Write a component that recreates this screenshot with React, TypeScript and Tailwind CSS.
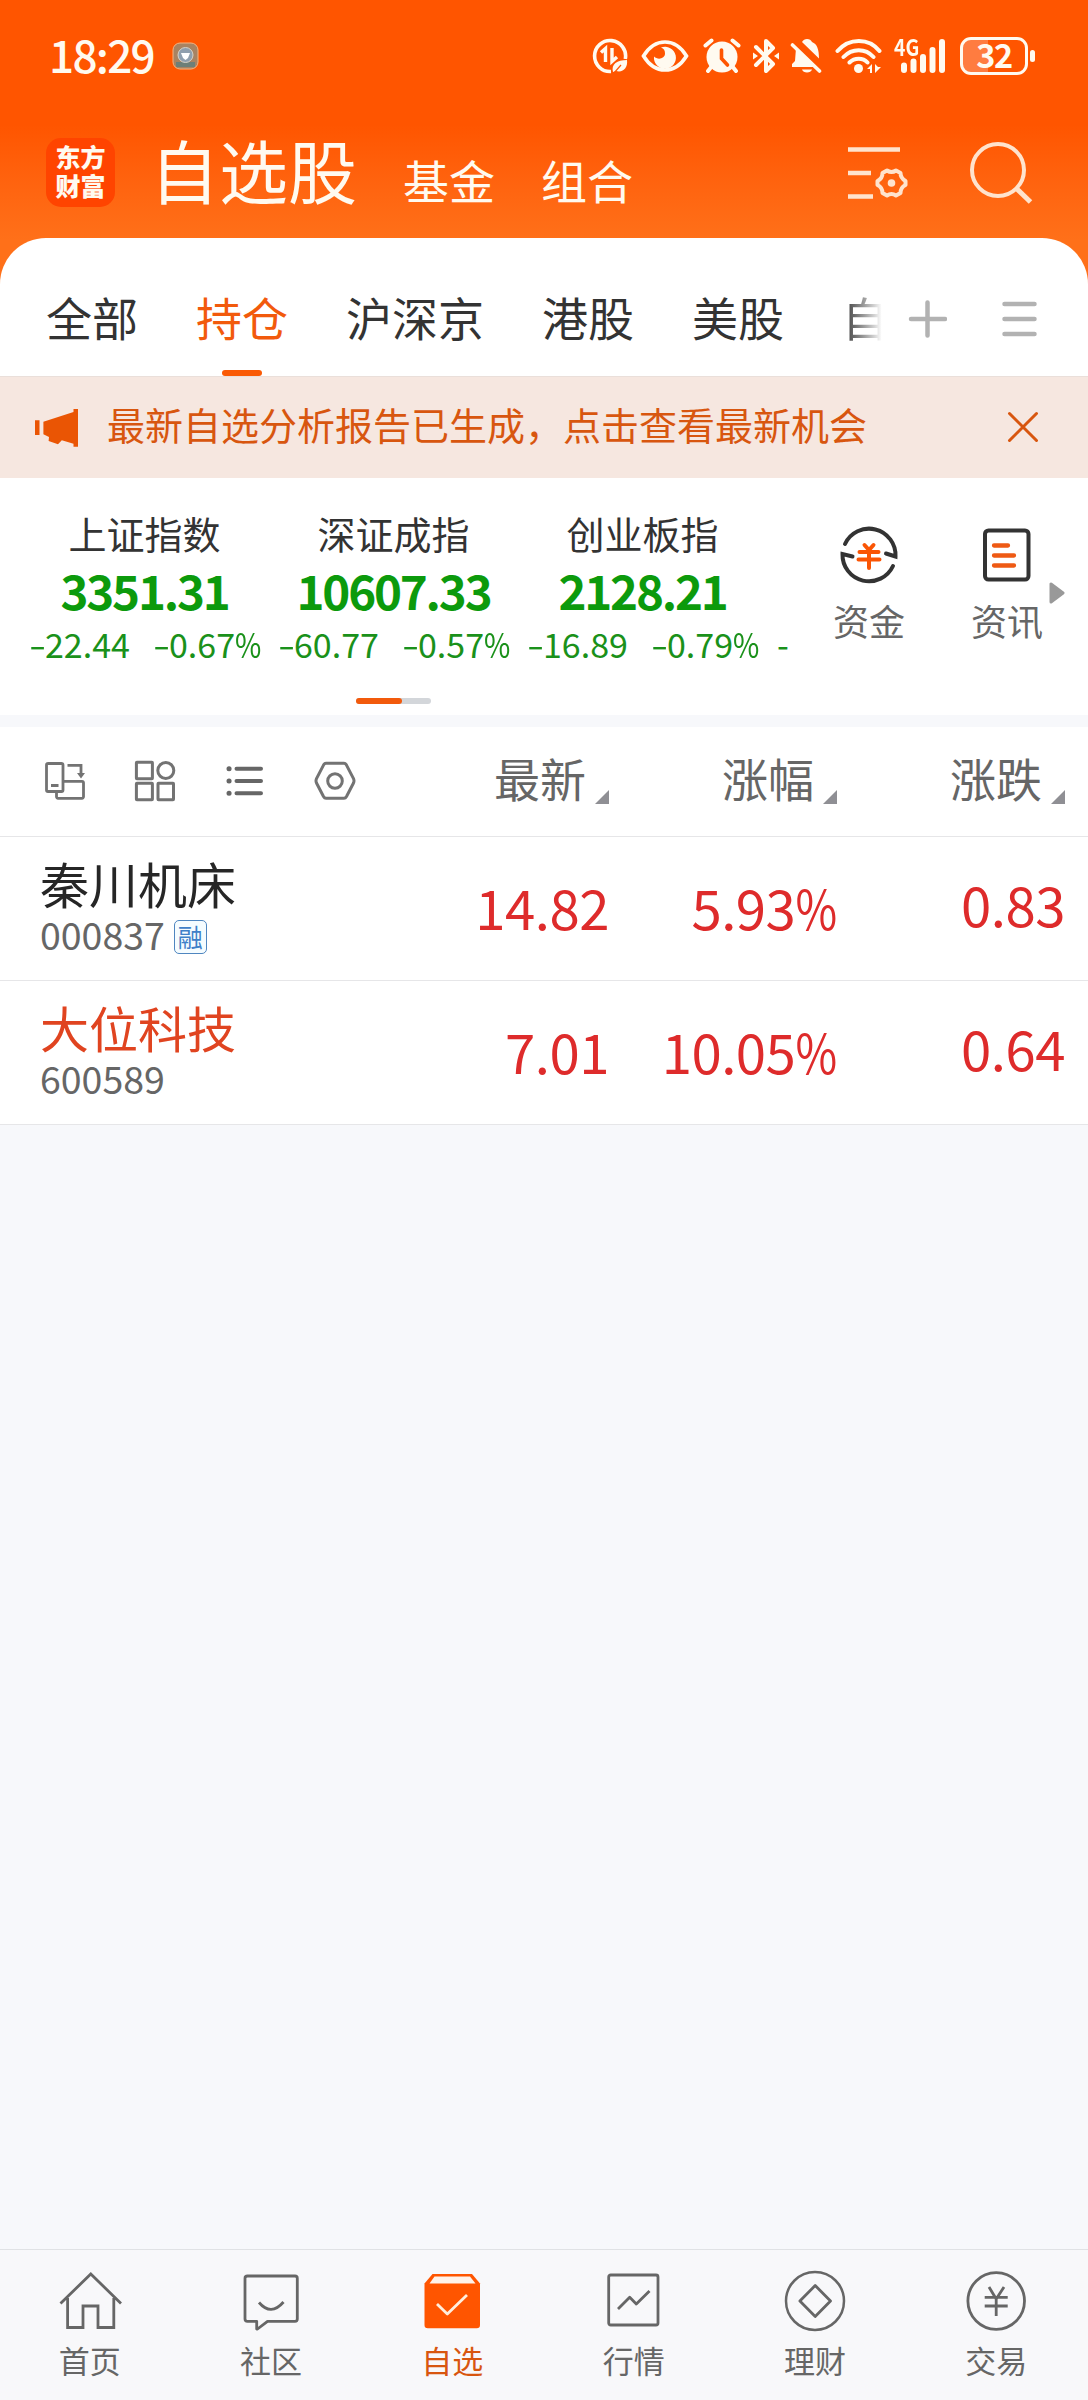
import type { ReactNode } from "react";

const tabs = ["全部", "持仓", "沪深京", "港股", "美股"];

const indices = [
  { name: "上证指数", value: "3351.31", change: "22.44", percent: "0.67" },
  { name: "深证成指", value: "10607.33", change: "60.77", percent: "0.57" },
  { name: "创业板指", value: "2128.21", change: "16.89", percent: "0.79" },
];

const stocks = [
  {
    name: "秦川机床",
    code: "000837",
    margin: true,
    color: "text-[#262626]",
    price: "14.82",
    percent: "5.93",
    change: "0.83",
  },
  {
    name: "大位科技",
    code: "600589",
    margin: false,
    color: "text-[#e04420]",
    price: "7.01",
    percent: "10.05",
    change: "0.64",
  },
];

function StatusIcons() {
  return (
    <div className="flex items-center text-[#fffaf0]">
      {/* data saver */}
      <svg width="36" height="36" viewBox="0 0 36 36" fill="none" stroke="currentColor">
        <path d="M19 33.500A15.500 15.500 0 1 1 33.300 21" strokeWidth="3.6" />
        <path d="M9 14.500l4.500-4V24M20 10v13.500l5-4.500" strokeWidth="3.4" />
        <path d="M21 34c-2-8 4-12 14-12 1 8-4 13-11 11z" fill="currentColor" stroke="none" />
        <path d="M22 35l7-8" stroke="#ff5500" strokeWidth="1.2" />
      </svg>
      {/* eye */}
      <svg className="ml-[13px]" width="48" height="36" viewBox="0 0 48 36">
        <path
          d="M2.500 18C8 9 15 4 24 4s16 5 21.500 14C40 27 33 32 24 32S8 27 2.500 18z"
          fill="none"
          stroke="currentColor"
          strokeWidth="3.6"
        />
        <path d="M20 9.500a11 11 0 1 1-7 9c4 4 11 2 11-3 0-3-1-5-4-6z" fill="currentColor" />
      </svg>
      {/* alarm */}
      <svg className="ml-[14px]" width="38" height="36" viewBox="0 0 38 36">
        <path
          d="M2.500 7.500l6-5M35.500 7.500l-6-5M9 28l-4 5M29 28l4 5"
          stroke="currentColor"
          strokeWidth="4"
          strokeLinecap="round"
        />
        <circle cx="19" cy="19" r="15.500" fill="currentColor" />
        <path
          d="M18.500 12v8.500l6 6.500"
          fill="none"
          stroke="#ff5500"
          strokeWidth="3.6"
          strokeLinecap="round"
        />
      </svg>
      {/* bluetooth */}
      <svg className="ml-[12px]" width="26" height="36" viewBox="0 0 26 36">
        <path
          d="M3 9l17 17-7 7V3l7 7L3 27"
          fill="none"
          stroke="currentColor"
          strokeWidth="4"
          strokeLinecap="round"
          strokeLinejoin="round"
        />
        <path d="M0 14.500l5 3.500-5 3.500zM26 14.500L21 18l5 3.500z" fill="currentColor" />
      </svg>
      {/* muted bell */}
      <svg className="ml-[11px]" width="33" height="36" viewBox="0 0 33 36">
        <path d="M12 4c1-2 3-3 5-3 2.500 0 4 1 5 3 5 2 7 7 7 16.500zM6 10l20 19H2v-3l3-3z" fill="currentColor" />
        <path d="M2.500 7l27 26" stroke="currentColor" strokeWidth="3.6" strokeLinecap="round" />
        <path d="M12 31.500h10c-1 4-9 4-10 0z" fill="currentColor" />
      </svg>
      {/* wifi */}
      <svg className="ml-[12px]" width="48" height="36" viewBox="0 0 48 36">
        <path
          d="M2.500 13C14-.5 34-.5 44.500 13M8.500 19c8.500-9 22-9 30 0M14.500 24.500c5-5 13.500-5 18 0"
          fill="none"
          stroke="currentColor"
          strokeWidth="4"
          strokeLinecap="round"
        />
        <circle cx="23.500" cy="30.500" r="4.500" fill="currentColor" />
        <path d="M37 26v9h-2v-4h-3zM40 26v9l6-6h-3z" fill="currentColor" />
      </svg>
      {/* signal */}
      <div className="relative ml-[11px] h-[36px] w-[52px]">
        <span className="absolute -top-[3px] left-0 origin-left scale-x-[0.84] text-[23px] leading-[23px] font-bold">
          4G
        </span>
        <svg className="absolute top-0 left-0" width="52" height="36" viewBox="0 0 52 36">
          <path
            d="M10 27.500v4.500M19.500 23.500v8.500M29 19v13M38.500 12v20M48 4v28"
            stroke="currentColor"
            strokeWidth="6"
            strokeLinecap="round"
          />
        </svg>
      </div>
      {/* battery */}
      <div className="ml-[14px] flex h-[38px] w-[68px] items-center justify-center rounded-[11px] border-[3px] border-current bg-linear-to-r from-[#ff7c40] from-40% to-transparent to-40%">
        <span className="-mt-[4px] text-[32.500px] leading-[34px] font-bold tracking-[-1.5px]">32</span>
      </div>
      <div className="ml-[2px] h-[12px] w-[5px] rounded-full bg-current" />
    </div>
  );
}

function Delta({ children }: { children: ReactNode }) {
  return (
    <span className="flex whitespace-nowrap">
      <span className="w-[16px] origin-left scale-x-[1.45]">-</span>
      {children}
    </span>
  );
}

function SortHeader({ children }: { children: ReactNode }) {
  return (
    <div className="flex w-[228px] justify-end">
      <span>{children}</span>
      <svg className="mt-[41px] ml-[9px]" width="14" height="14" viewBox="0 0 14 14">
        <path d="M14 0v14H0z" fill="#8f8f94" />
      </svg>
    </div>
  );
}

function NavItem({ label, active, children }: { label: string; active?: boolean; children: ReactNode }) {
  return (
    <div
      className={`flex flex-1 flex-col items-center pt-[19px] ${active ? "text-[#d8560f]" : "text-[#666666]"}`}
    >
      <svg
        width="64"
        height="64"
        viewBox="0 0 64 64"
        fill="none"
        stroke="currentColor"
        strokeWidth="2.8"
        strokeLinejoin="round"
      >
        {children}
      </svg>
      <span className="mt-[9px] -ml-[2px] text-[31px] leading-[36px]">{label}</span>
    </div>
  );
}

export default function App() {
  return (
    <div className="flex h-[2400px] w-[1088px] flex-col overflow-hidden bg-[#f7f8fb] font-['Noto_Sans_CJK_SC',sans-serif]">
      <div className="bg-linear-to-b from-[#ff5500] from-[125px] to-[#ff7019] to-[240px]">
        {/* Status bar */}
        <div className="flex h-[112px] items-center pl-[49px] text-[#fffaf0]">
          <span className="-mt-[4px] w-[123px] text-[44px] leading-[50px] font-medium tracking-[-1.7px]">
            18:29
          </span>
          <svg width="27" height="28" viewBox="0 0 27 28">
            <rect x="1" y="1" width="25" height="26" rx="7" fill="#a88362" stroke="#f5b380" />
            <path d="M4 20h19v5H4z" fill="#6d7f78" />
            <circle cx="13.500" cy="13" r="7.500" fill="#8f9fae" stroke="#d6d3c8" />
            <path d="M9 11h9l-2 5-2.500 2-2.500-2z" fill="#fff" />
          </svg>
          <div className="ml-[393px]">
            <StatusIcons />
          </div>
        </div>

        {/* Title bar */}
        <div className="flex h-[126px] text-[#fffaf0]">
          <div className="mt-[26px] ml-[46px] flex h-[69px] w-[69px] flex-col items-center rounded-[15px] bg-[#ff4400] pt-[4px] text-[25px] leading-[29px] font-black">
            <span>东方</span>
            <span>财富</span>
          </div>
          <div className="mt-[7px] ml-[35px] flex items-baseline gap-[46px] text-[46px] leading-[100px]">
            <span className="text-[69px]">自选股</span>
            <span>基金</span>
            <span>组合</span>
          </div>
          <svg
            className="mt-[33px] ml-[213px]"
            width="64"
            height="58"
            viewBox="0 0 64 58"
            fill="none"
            stroke="#ffe3cd"
            strokeWidth="4.500"
          >
            <path d="M2 4.500h52M2 28h23M2 51.500h25" />
            <path
              d="M41 25.500q4.500 3 9 0l4.500 2.500q0 5 5 8v4q-5 2.500-5 8l-4.500 2.500q-4.500-3-9 0L36.500 48q0-5.500-5-8v-4q5-2.500 5-8z"
              strokeWidth="4"
              strokeLinejoin="round"
            />
            <circle cx="45.500" cy="38" r="3.800" fill="#ffe3cd" stroke="none" />
          </svg>
          <svg
            className="mt-[27px] ml-[58px]"
            width="66"
            height="68"
            viewBox="0 0 66 68"
            fill="none"
            stroke="#ffe3cd"
            strokeWidth="4"
          >
            <circle cx="30" cy="31" r="26" />
            <path d="M48.500 49.500l14 13.500" strokeWidth="5" />
          </svg>
        </div>

        {/* Group tabs */}
        <div className="flex h-[138px] rounded-t-[46px] bg-white text-[46px] leading-[60px] text-[#333333]">
          <div className="flex w-[882px] gap-[58px] overflow-hidden pt-[48px] pl-[46px] whitespace-nowrap">
            {tabs.map((tab) =>
              tab === "持仓" ? (
                <div key={tab} className="flex flex-col items-center text-[#f25a0c]">
                  <span>{tab}</span>
                  <span className="mt-[24px] h-[6px] w-[40px] rounded-full bg-[#fa5a05]" />
                </div>
              ) : (
                <span key={tab}>{tab}</span>
              )
            )}
            <span className="w-[40px] shrink-0 overflow-hidden bg-linear-to-r from-[#333333] to-white bg-clip-text text-transparent">
              自
            </span>
          </div>
          <svg className="mt-[61px] ml-[25px]" width="40" height="40" viewBox="0 0 40 40">
            <path d="M4 20h34M20.500 3.500v33" stroke="#b2b2b2" strokeWidth="4.500" strokeLinecap="round" />
          </svg>
          <svg className="mt-[61px] ml-[53px]" width="40" height="40" viewBox="0 0 40 40">
            <path
              d="M4.500 5h30M4.500 20h30M4.500 35h30"
              stroke="#b2b2b2"
              strokeWidth="4.500"
              strokeLinecap="round"
            />
          </svg>
        </div>
      </div>

      {/* Report notice */}
      <div className="flex h-[102px] items-center border-t border-[#eadfda] bg-[#f6e7e0] pb-[2px] pl-[33px]">
        <svg width="48" height="42" viewBox="0 0 48 42" fill="#ea5504">
          <path d="M2 14.300h4.500V29H2zM10.400 15.700L40.500 6V3H45v37.700h-4.500v-3L28.800 34.300 25 38.300 15.600 35l.4-4-5.600-2.700z" />
        </svg>
        <span className="-mt-[6px] ml-[26px] w-[860px] text-[38px] leading-[50px] text-[#d8560f]">
          最新自选分析报告已生成，点击查看最新机会
        </span>
        <svg className="ml-[39px]" width="34" height="34" viewBox="0 0 34 34">
          <path
            d="M3.500 3.500l27 27M30.500 3.500l-27 27"
            stroke="#d8560f"
            strokeWidth="3"
            strokeLinecap="round"
          />
        </svg>
      </div>

      {/* Market indices */}
      <div className="h-[237px] shrink-0 bg-white">
        <div className="flex h-[220px]">
          <div className="flex w-[796px] overflow-hidden pl-[20px]">
            {indices.map((item) => (
              <div key={item.name} className="w-[249px] shrink-0 pt-[30px]">
                <div className="text-center text-[38px] leading-[50px] text-[#333333]">{item.name}</div>
                <div className="mt-[7px] text-center text-[47.500px] leading-[50px] font-bold tracking-[-2.2px] text-[#0c9a0c]">
                  {item.value}
                </div>
                <div className="mt-[6px] flex text-[34px] leading-[46px] text-[#1a911a]">
                  <span className="w-[124px] pl-[9px]">
                    <Delta>{item.change}</Delta>
                  </span>
                  <span className="pl-[9px]">
                    <Delta>
                      {item.percent}
                      <span className="origin-left scale-x-[0.84]">%</span>
                    </Delta>
                  </span>
                </div>
              </div>
            ))}
            <div className="pt-[143px] pl-[10px] text-[34px] leading-[46px] text-[#1a911a]">-</div>
          </div>

          <div className="flex pt-[47px] text-[36px] leading-[46px] text-[#666666]">
            <div className="ml-[36px] flex w-[74px] flex-col items-center">
              <svg width="60" height="60" viewBox="0 0 60 60" fill="none" strokeLinecap="round">
                <path
                  d="M6 19A26.500 26.500 0 0 1 56.500 31.500L47 28.500M54 41A26.500 26.500 0 0 1 3.500 29L13.500 31.500"
                  stroke="#333333"
                  strokeWidth="4"
                />
                <path
                  d="M25.500 20l4.500 5 4.500-5M20.500 27h19M19.500 34.500h21M30 25v18"
                  stroke="#fa5505"
                  strokeWidth="4"
                />
              </svg>
              <span className="mt-[12px]">资金</span>
            </div>
            <div className="ml-[64px] flex w-[74px] flex-col items-center">
              <svg width="60" height="60" viewBox="0 0 60 60" fill="none" strokeLinecap="round">
                <rect x="8" y="5.500" width="43.500" height="49" rx="3.500" stroke="#333333" strokeWidth="4" />
                <path d="M17 20.500h14M17 30.500h20M17 40.500h20" stroke="#ee5a14" strokeWidth="4.300" />
              </svg>
              <span className="mt-[12px]">资讯</span>
            </div>
            <svg className="mt-[57px] ml-[5px]" width="16" height="22" viewBox="0 0 16 22">
              <path d="M2 2v18L14 11z" fill="#999999" stroke="#999999" strokeWidth="3" strokeLinejoin="round" />
            </svg>
          </div>
        </div>
        <div className="ml-[356px] h-[6px] w-[75px] rounded-full bg-[#d3d6da]">
          <div className="h-[6px] w-[46px] rounded-full bg-[#f25a0c]" />
        </div>
      </div>

      {/* List header */}
      <div className="mt-[12px] flex h-[110px] shrink-0 border-b border-[#e6e6e8] bg-white">
        <div className="flex w-[381px] gap-[46px] pt-[32px] pl-[43px]">
          <svg width="44" height="44" viewBox="0 0 44 44" fill="none" stroke="#737373" strokeWidth="2.8">
            <rect x="3.500" y="4.500" width="16.500" height="28" rx="1.500" />
            <path d="M8 26.500h7.500M24.500 6.300H38V16M20.500 22.300h18.500a1.500 1.500 0 0 1 1.500 1.500v14a1.500 1.500 0 0 1-1.500 1.500H15a1.500 1.500 0 0 1-1.500-1.500v-5" />
            <path d="M34 14h8l-4 5.500z" fill="#737373" stroke="none" />
          </svg>
          <svg width="44" height="44" viewBox="0 0 44 44" fill="none" stroke="#737373" strokeWidth="3">
            <rect x="3.400" y="3.200" width="16" height="16.500" rx="0.500" />
            <circle cx="32.800" cy="11.500" r="8" />
            <rect x="3.400" y="24.300" width="16" height="16.500" rx="0.500" />
            <rect x="25" y="24.300" width="15.500" height="16.500" rx="0.500" />
          </svg>
          <svg width="44" height="44" viewBox="0 0 44 44" fill="none" stroke="#666666" strokeLinecap="round">
            <path d="M13.500 9.700h24.500M13.500 22h24.500M13.500 34.300h24.500" strokeWidth="4" />
            <path d="M6 9.700h.1M6 22h.1M6 34.300h.1" strokeWidth="5" />
          </svg>
          <svg width="44" height="44" viewBox="0 0 44 44" fill="none" stroke="#737373" strokeWidth="3">
            <path d="M13 4.300h18q1.500 0 2.500 1.800l7 13.500q1 2.200 0 4.400l-7 13.500q-1 1.800-2.500 1.800H13q-1.500 0-2.500-1.800l-7-13.500q-1-2.200 0-4.400l7-13.500q1-1.800 2.500-1.800z" />
            <circle cx="22" cy="22" r="7.300" />
          </svg>
        </div>
        <div className="flex pt-[22px] text-[46px] leading-[56px] text-[#666666]">
          <SortHeader>最新</SortHeader>
          <SortHeader>涨幅</SortHeader>
          <SortHeader>涨跌</SortHeader>
        </div>
      </div>

      {/* Stocks */}
      {stocks.map((stock) => (
        <div key={stock.code} className="flex h-[144px] shrink-0 border-b border-[#e6e6e8] bg-white">
          <div className="w-[381px] pt-[18px] pl-[40px]">
            <div className={`text-[49px] leading-[56px] ${stock.color}`}>{stock.name}</div>
            <div className="flex items-center text-[37.500px] leading-[46px] text-[#666666]">
              <span>{stock.code}</span>
              {stock.margin && (
                <span className="mt-[6px] ml-[9px] flex h-[34px] w-[33px] items-center justify-center rounded-[5px] border border-[#4f86c0] bg-[#f5fcff] pb-[2px] text-[25px] leading-[26px] text-[#3f80c8]">
                  融
                </span>
              )}
            </div>
          </div>
          <div className="flex text-right text-[54.500px] leading-[60px] tracking-[-0.5px] text-[#de2b2b]">
            <span className="w-[228px] pt-[40px]">{stock.price}</span>
            <span className="flex w-[228px] justify-end pt-[40px]">
              {stock.percent}
              <span className="-ml-[8px] origin-right scale-x-[0.83]">%</span>
            </span>
            <span className="w-[228px] pt-[37px]">{stock.change}</span>
          </div>
        </div>
      ))}

      {/* Bottom navigation */}
      <div className="mt-auto flex h-[151px] shrink-0 border-t border-[#e0e2e5] bg-[#f8f8fa]">
        <NavItem label="首页">
          <path d="M1.500 34.500L31.800 5 62 34.500M8.600 29v29.500H24V37h15v21.500h15.800V29" strokeLinejoin="miter" />
        </NavItem>
        <NavItem label="社区">
          <path d="M7.500 7H55q2.300 0 2.300 2.300V50q0 2.300-2.300 2.300H27.500L17.500 60h-.8v-7.700H7.500Q5 52.300 5 50V9.300Q5 7 7.500 7z" />
          <path d="M19 33.500q12 14 24.500-.5" />
        </NavItem>
        <NavItem label="自选" active>
          <path
            d="M3.500 14.500L11.500 5h39.500l8 9.500V56q0 3.300-3.300 3.300H6.800Q3.500 59.300 3.500 56z"
            fill="#ff5500"
            stroke="none"
          />
          <path d="M8.500 14.500l5-7h35.500l5.500 7z" fill="#fff3ea" stroke="none" />
          <path d="M16 35l10.300 10L46 26" stroke="#ffeedd" />
        </NavItem>
        <NavItem label="行情">
          <rect x="5.700" y="6" width="49.300" height="50" rx="2" />
          <path d="M15 40l11.700-11.700 6.600 6.700L46.500 22" />
        </NavItem>
        <NavItem label="理财">
          <circle cx="31" cy="32" r="29" strokeWidth="2.500" />
          <path d="M31.200 16.500L46.500 32 31.200 47.500 15.900 32z" />
        </NavItem>
        <NavItem label="交易">
          <circle cx="31.200" cy="32" r="28.300" />
          <path d="M24 18l7.200 12L39 18M31.200 29v18M19.700 28.300h23M19.700 37h23" />
        </NavItem>
      </div>
    </div>
  );
}
